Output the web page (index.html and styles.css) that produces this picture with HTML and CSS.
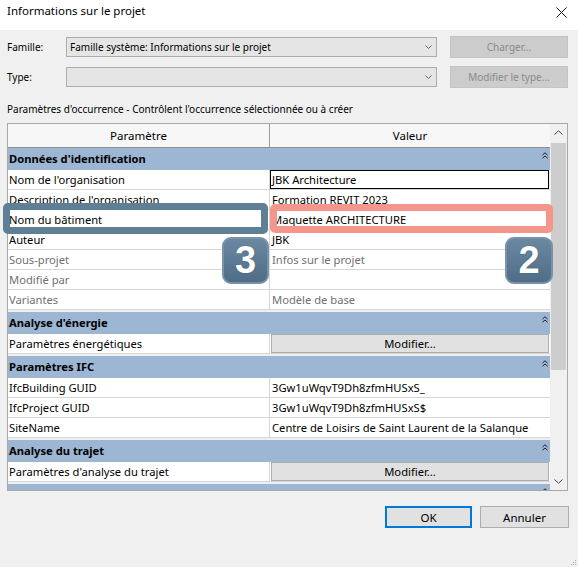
FILE: index.html
```html
<!DOCTYPE html>
<html lang="fr">
<head>
<meta charset="utf-8">
<title>Informations sur le projet</title>
<link rel="stylesheet" href="styles.css">
</head>
<body>
<div class="titlebar">
  <span class="title">Informations sur le projet</span>
  <svg class="close" width="11" height="11" viewBox="0 0 11 11"><path d="M0.5 0.5 L10.5 10.5 M10.5 0.5 L0.5 10.5" stroke="#111" stroke-width="1" fill="none"/></svg>
</div>
<div class="content">
  <div class="field-row">
    <span class="label">Famille:</span>
    <div class="combo"><span>Famille système: Informations sur le projet</span><svg width="7" height="4" viewBox="0 0 7 4"><path d="M0.5 0.5 L3.5 3.5 L6.5 0.5" stroke="#666" fill="none"/></svg></div>
    <div class="side-btn">Charger...</div>
  </div>
  <div class="field-row">
    <span class="label">Type:</span>
    <div class="combo"><span></span><svg width="7" height="4" viewBox="0 0 7 4"><path d="M0.5 0.5 L3.5 3.5 L6.5 0.5" stroke="#666" fill="none"/></svg></div>
    <div class="side-btn">Modifier le type...</div>
  </div>
  <div class="caption">Paramètres d'occurrence - Contrôlent l'occurrence sélectionnée ou à créer</div>
  <div class="grid">
    <div class="grid-main">
      <div class="grid-head">
        <div class="hcell p">Paramètre</div>
        <div class="hcell v">Valeur</div>
      </div>
      <div class="group">
        <div class="ghead"><span>Données d'identification</span><svg width="6" height="7" viewBox="0 0 6 7"><path d="M0.5 3 L3 0.8 L5.5 3 M0.5 6.2 L3 4 L5.5 6.2" stroke="#222" fill="none"/></svg></div>
        <div class="row"><div class="c p">Nom de l'organisation</div><div class="c v edit">JBK Architecture</div></div>
        <div class="row"><div class="c p">Description de l'organisation</div><div class="c v">Formation REVIT 2023</div></div>
        <div class="row"><div class="c p">Nom du bâtiment</div><div class="c v">Maquette ARCHITECTURE</div></div>
        <div class="row"><div class="c p">Auteur</div><div class="c v">JBK</div></div>
        <div class="row dim"><div class="c p">Sous-projet</div><div class="c v">Infos sur le projet</div></div>
        <div class="row dim"><div class="c p">Modifié par</div><div class="c v"></div></div>
        <div class="row dim"><div class="c p">Variantes</div><div class="c v">Modèle de base</div></div>
      </div>
      <div class="group">
        <div class="ghead"><span>Analyse d'énergie</span><svg width="6" height="7" viewBox="0 0 6 7"><path d="M0.5 3 L3 0.8 L5.5 3 M0.5 6.2 L3 4 L5.5 6.2" stroke="#222" fill="none"/></svg></div>
        <div class="row"><div class="c p">Paramètres énergétiques</div><div class="c v btncell"><div class="mod">Modifier...</div></div></div>
      </div>
      <div class="group">
        <div class="ghead"><span>Paramètres IFC</span><svg width="6" height="7" viewBox="0 0 6 7"><path d="M0.5 3 L3 0.8 L5.5 3 M0.5 6.2 L3 4 L5.5 6.2" stroke="#222" fill="none"/></svg></div>
        <div class="row"><div class="c p">IfcBuilding GUID</div><div class="c v">3Gw1uWqvT9Dh8zfmHUSxS_</div></div>
        <div class="row"><div class="c p">IfcProject GUID</div><div class="c v">3Gw1uWqvT9Dh8zfmHUSxS$</div></div>
        <div class="row"><div class="c p">SiteName</div><div class="c v">Centre de Loisirs de Saint Laurent de la Salanque</div></div>
      </div>
      <div class="group">
        <div class="ghead"><span>Analyse du trajet</span><svg width="6" height="7" viewBox="0 0 6 7"><path d="M0.5 3 L3 0.8 L5.5 3 M0.5 6.2 L3 4 L5.5 6.2" stroke="#222" fill="none"/></svg></div>
        <div class="row"><div class="c p">Paramètres d'analyse du trajet</div><div class="c v btncell"><div class="mod">Modifier...</div></div></div>
      </div>
      <div class="group">
        <div class="ghead"><span></span><svg width="6" height="7" viewBox="0 0 6 7"><path d="M0.5 3 L3 0.8 L5.5 3 M0.5 6.2 L3 4 L5.5 6.2" stroke="#222" fill="none"/></svg></div>
      </div>
    </div>
    <div class="scrollbar">
      <div class="arrow"><svg width="9" height="5" viewBox="0 0 9 5"><path d="M0.5 4.5 L4.5 0.8 L8.5 4.5" stroke="#444" fill="none"/></svg></div>
      <div class="thumb"></div>
      <div class="track"></div>
      <div class="arrow"><svg width="9" height="5" viewBox="0 0 9 5"><path d="M0.5 0.5 L4.5 4.2 L8.5 0.5" stroke="#444" fill="none"/></svg></div>
    </div>
  </div>
  <div class="footer">
    <div class="btn ok">OK</div>
    <div class="btn">Annuler</div>
  </div>
</div>

<div class="mark mark-blue"></div>
<div class="mark mark-red"></div>
<div class="badge badge-3">3</div>
<div class="badge badge-2">2</div>
<svg class="grip" width="7" height="7" viewBox="0 0 7 7"><g fill="#b5b5b5"><rect x="5" y="1" width="1" height="1"/><rect x="3" y="3" width="1" height="1"/><rect x="5" y="3" width="1" height="1"/><rect x="1" y="5" width="1" height="1"/><rect x="3" y="5" width="1" height="1"/><rect x="5" y="5" width="1" height="1"/></g></svg>
</body>
</html>
```

FILE: styles.css
```css
* { box-sizing: border-box; }

body {
  margin: 0;
  width: 578px;
  height: 567px;
  background: #f0f0f0;
  font-family: "Noto Sans", "Liberation Sans", sans-serif;
  color: #000;
  position: relative;
  overflow: hidden;
}

.titlebar {
  height: 30px;
  background: #fff;
  display: flex;
  align-items: flex-start;
  justify-content: space-between;
  padding: 3px 11px 0 7px;
  font-size: 11.5px;
}
.close { margin-top: 4px; }

.content {
  padding: 6px 0 0 7px;
}

.field-row {
  display: flex;
  align-items: center;
  height: 22px;
  font-size: 10px;
}
.field-row + .field-row { margin-top: 8px; }

.label { width: 59px; }

.combo {
  width: 371px;
  height: 20px;
  border: 1px solid #adadad;
  background: #e5e5e5;
  display: flex;
  align-items: center;
  justify-content: space-between;
  padding: 0 4px 0 3px;
}

.side-btn {
  margin-left: 13px;
  width: 118px;
  height: 22px;
  background: #cccccc;
  border: 1px solid #c4c4c4;
  color: #8a8a8a;
  display: flex;
  align-items: center;
  justify-content: center;
}

.caption {
  margin-top: 14px;
  height: 14px;
  line-height: 14px;
  font-size: 10px;
}

.grid {
  margin-top: 7px;
  width: 561px;
  height: 368px;
  border: 1px solid #a8a8a8;
  display: flex;
}

.grid-main {
  width: 542px;
  overflow: hidden;
  background: #f0f0f0;
}

.grid-head {
  display: flex;
  height: 24px;
  border-bottom: 1px solid #8e8e8e;
  background: #f7f7f7;
  font-size: 11.5px;
}
.hcell {
  display: flex;
  align-items: center;
  justify-content: center;
}
.hcell.p { width: 262px; border-right: 1px solid #9a9a9a; }
.hcell.v { width: 280px; }

.group + .group { margin-top: 2px; }

.ghead {
  height: 22px;
  background: #9cb6d3;
  display: flex;
  justify-content: space-between;
  align-items: flex-start;
  padding: 0 2px 0 1px;
  font-weight: bold;
  font-size: 11.2px;
  line-height: 22px;
}
.ghead svg { margin-top: 4px; }

.row {
  display: flex;
  height: 20px;
  border-bottom: 1px solid #d6d6d6;
  font-size: 11.2px;
  line-height: 19px;
}
.c {
  background: #fff;
  white-space: nowrap;
  overflow: hidden;
}
.c.p { width: 262px; border-right: 1px solid #d6d6d6; padding-left: 1px; }
.c.v { width: 280px; padding-left: 2px; }
.c.v.edit { border: 1px solid #000; padding-left: 1px; line-height: 17px; width: 279px; }
.row.dim { color: #707070; }

.c.v.btncell { padding: 0 1px; background: #fff; }
.mod {
  height: 19px;
  background: #e1e1e1;
  border: 1px solid #adadad;
  text-align: center;
  line-height: 17px;
}

.scrollbar {
  width: 17px;
  background: #f0f0f0;
  display: flex;
  flex-direction: column;
  align-items: center;
}
.arrow {
  height: 17px;
  width: 17px;
  display: flex;
  align-items: center;
  justify-content: center;
}
.thumb {
  margin-top: 2px;
  width: 15px;
  height: 227px;
  background: #cdcdcd;
}
.track { flex: 1; }

.footer {
  display: flex;
  justify-content: flex-end;
  gap: 8px;
  margin-top: 15px;
  padding-right: 9px;
}
.btn {
  width: 89px;
  height: 22px;
  background: #e1e1e1;
  border: 1px solid #adadad;
  font-size: 11.5px;
  display: flex;
  align-items: center;
  justify-content: center;
}
.btn.ok {
  width: 87px;
  border: 2px solid #0078d7;
}

.mark {
  position: absolute;
  border-width: 7px;
  border-style: solid;
  border-radius: 5px;
}
.mark-blue {
  left: 3px;
  top: 203px;
  width: 265px;
  height: 31px;
  border-color: #5f7f94;
}
.mark-red {
  left: 270px;
  top: 204px;
  width: 283px;
  height: 29px;
  border-color: #f5968d;
}

.badge {
  position: absolute;
  top: 237px;
  width: 47px;
  height: 47px;
  border-radius: 9px;
  border: 2px solid #7893a9;
  background: linear-gradient(#6a89a1, #4f6d86);
  color: #fff;
  font-family: "Liberation Sans", Arial, sans-serif;
  font-weight: bold;
  font-size: 38px;
  display: flex;
  align-items: center;
  justify-content: center;
  text-shadow: 0 0 1px #2c4358;
}
.badge-3 { left: 222px; }
.badge-2 { left: 505px; width: 48px; }

.grip {
  position: absolute;
  right: 1px;
  bottom: 1px;
}
```
